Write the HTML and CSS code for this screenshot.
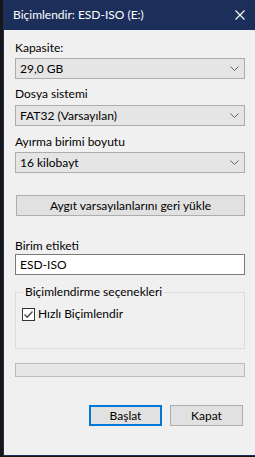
FILE: index.html
```html
<!DOCTYPE html>
<html lang="tr">
<head>
    <meta charset="UTF-8">
    <meta name="viewport" content="width=device-width, initial-scale=1.0">
    <title>Biçimlendir</title>
    <link rel="stylesheet" href="styles.css">
</head>
<body>
    <div class="dialog">
        <!-- Title bar -->
        <div class="title-bar">
            <span class="title-text">Biçimlendir: ESD-ISO (E:)</span>
            <span class="close-btn">
                <svg width="10" height="10" viewBox="0 0 10 10">
                    <path d="M0.5 0.5 L9.5 9.5 M9.5 0.5 L0.5 9.5" stroke="#ffffff" stroke-width="1.1" fill="none"/>
                </svg>
            </span>
        </div>

        <!-- Dialog body -->
        <div class="dialog-body">
            <div class="field-label first">Kapasite:</div>
            <div class="combo">
                <span>29,0 GB</span>
                <svg class="chevron" width="9" height="5" viewBox="0 0 9 5"><path d="M0.5 0.5 L4.5 4.5 L8.5 0.5" stroke="#606060" stroke-width="1" fill="none"/></svg>
            </div>

            <div class="field-label second">Dosya sistemi</div>
            <div class="combo">
                <span>FAT32 (Varsayılan)</span>
                <svg class="chevron" width="9" height="5" viewBox="0 0 9 5"><path d="M0.5 0.5 L4.5 4.5 L8.5 0.5" stroke="#606060" stroke-width="1" fill="none"/></svg>
            </div>

            <div class="field-label third">Ayırma birimi boyutu</div>
            <div class="combo">
                <span>16 kilobayt</span>
                <svg class="chevron" width="9" height="5" viewBox="0 0 9 5"><path d="M0.5 0.5 L4.5 4.5 L8.5 0.5" stroke="#606060" stroke-width="1" fill="none"/></svg>
            </div>

            <div class="btn wide">Aygıt varsayılanlarını geri yükle</div>

            <div class="field-label fourth">Birim etiketi</div>
            <div class="text-input">ESD-ISO</div>

            <div class="group">
                <div class="group-title">Biçimlendirme seçenekleri</div>
                <div class="check-row">
                    <span class="checkbox">
                        <svg width="11" height="11" viewBox="0 0 11 11"><path d="M1.5 5.5 L4.2 8.2 L9.5 2.5" stroke="#4a4a4a" stroke-width="1.4" fill="none"/></svg>
                    </span>
                    <span>Hızlı Biçimlendir</span>
                </div>
            </div>

            <div class="progress"></div>

            <div class="actions">
                <div class="btn action focused">Başlat</div>
                <div class="btn action">Kapat</div>
            </div>
        </div>
    </div>
</body>
</html>
```

FILE: styles.css
```css
* {
    margin: 0;
    padding: 0;
    box-sizing: border-box;
}

body {
    font-family: Lato, "Noto Sans", sans-serif;
    font-size: 12px;
    line-height: 16px;
    color: #000;
    background: #161616;
    width: 255px;
    height: 457px;
    overflow: hidden;
}

.dialog {
    margin-left: 3px;
    height: 456px;
    background: #f0f0f0;
    border-left: 1px solid #1c2e5a;
    border-bottom: 1px solid #1c2e5a;
    display: flex;
    flex-direction: column;
}

.title-bar {
    height: 30px;
    background: #1c2e5a;
    color: #fff;
    display: flex;
    align-items: center;
    justify-content: space-between;
    padding: 0 10px 0 9px;
    flex-shrink: 0;
}

.title-text {
    font-size: 12px;
    line-height: 16px;
}

.close-btn {
    display: flex;
    align-items: center;
}

.dialog-body {
    padding: 10px 10px 0 11px;
    display: flex;
    flex-direction: column;
}

.field-label {
    height: 16px;
    white-space: nowrap;
}

.field-label.first {
    margin-bottom: 2px;
}

.field-label.second {
    margin-top: 7px;
    margin-bottom: 3px;
}

.field-label.third {
    margin-top: 8px;
    margin-bottom: 2px;
}

.field-label.fourth {
    margin-top: 22px;
}

.combo {
    height: 21px;
    background: #e5e5e5;
    border: 1px solid #adadad;
    display: flex;
    align-items: center;
    justify-content: space-between;
    padding: 0 5px 0 4px;
}

.chevron {
    display: block;
}

.btn {
    height: 21px;
    background: #e1e1e1;
    border: 1px solid #adadad;
    display: flex;
    align-items: center;
    justify-content: center;
    white-space: nowrap;
}

.btn.wide {
    margin-top: 22px;
    margin-left: 1px;
}

.text-input {
    height: 21px;
    background: #fff;
    border: 1px solid #7a7a7a;
    padding: 0 4px;
    line-height: 19px;
}

.group {
    margin-top: 17px;
    height: 57px;
    border: 1px solid #dcdcdc;
    padding: 0 6px;
}

.group-title {
    width: fit-content;
    margin-top: -9px;
    margin-left: 1px;
    padding: 0 2px;
    background: #f0f0f0;
    white-space: nowrap;
}

.check-row {
    display: flex;
    align-items: center;
    gap: 3px;
    margin-top: 6px;
    height: 16px;
}

.checkbox {
    width: 13px;
    height: 13px;
    border: 1px solid #333;
    background: #fff;
    display: flex;
    align-items: center;
    justify-content: center;
    flex-shrink: 0;
}

.progress {
    margin-top: 14px;
    height: 14px;
    background: #e6e6e6;
    border: 1px solid #bcbcbc;
}

.actions {
    margin-top: 28px;
    display: flex;
    justify-content: flex-end;
    gap: 8px;
    padding-right: 2px;
}

.btn.action {
    width: 73px;
}

.btn.focused {
    border: 2px solid #0078d7;
}
```
